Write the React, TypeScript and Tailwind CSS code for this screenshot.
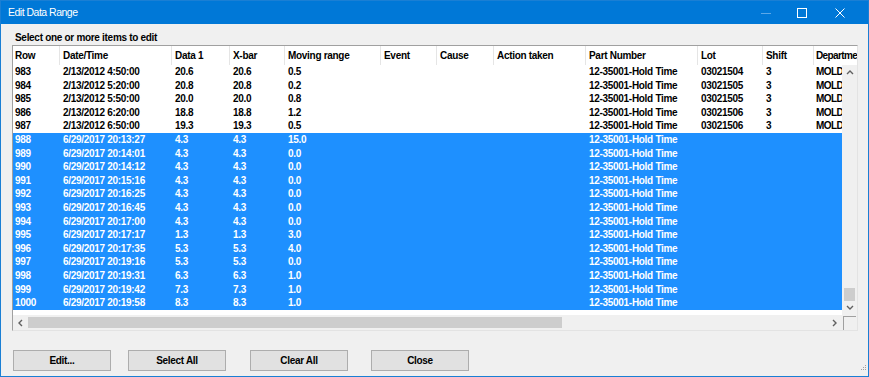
import React from 'react';

type Row = {
  row: string;
  date: string;
  d1: string;
  xbar: string;
  mr: string;
  lot?: string;
  shift?: string;
  dept?: string;
  selected?: boolean;
};

const columns = [
  { label: 'Row', w: 'w-[46px] pl-[2px]' },
  { label: 'Date/Time', w: 'w-[112px] pl-[3px]' },
  { label: 'Data 1', w: 'w-[58px] pl-[3px]' },
  { label: 'X-bar', w: 'w-[55px] pl-[3px]' },
  { label: 'Moving range', w: 'w-[96px] pl-[3px]' },
  { label: 'Event', w: 'w-[56px] pl-[3px]' },
  { label: 'Cause', w: 'w-[57px] pl-[3px]' },
  { label: 'Action taken', w: 'w-[92px] pl-[3px]' },
  { label: 'Part Number', w: 'w-[112px] pl-[3px]' },
  { label: 'Lot', w: 'w-[65px] pl-[3px]' },
  { label: 'Shift', w: 'w-[51px] pl-[3px]' },
  { label: 'Department', w: 'w-[80px] pl-[2px] tracking-[-0.6px]' },
];

const old: Row[] = [
  { row: '983', date: '2/13/2012 4:50:00', d1: '20.6', xbar: '20.6', mr: '0.5', lot: '03021504', shift: '3', dept: 'MOLD' },
  { row: '984', date: '2/13/2012 5:20:00', d1: '20.8', xbar: '20.8', mr: '0.2', lot: '03021505', shift: '3', dept: 'MOLD' },
  { row: '985', date: '2/13/2012 5:50:00', d1: '20.0', xbar: '20.0', mr: '0.8', lot: '03021505', shift: '3', dept: 'MOLD' },
  { row: '986', date: '2/13/2012 6:20:00', d1: '18.8', xbar: '18.8', mr: '1.2', lot: '03021506', shift: '3', dept: 'MOLD' },
  { row: '987', date: '2/13/2012 6:50:00', d1: '19.3', xbar: '19.3', mr: '0.5', lot: '03021506', shift: '3', dept: 'MOLD' },
];

const recent: [string, string, string, string][] = [
  ['988', '20:13:27', '4.3', '15.0'],
  ['989', '20:14:01', '4.3', '0.0'],
  ['990', '20:14:12', '4.3', '0.0'],
  ['991', '20:15:16', '4.3', '0.0'],
  ['992', '20:16:25', '4.3', '0.0'],
  ['993', '20:16:45', '4.3', '0.0'],
  ['994', '20:17:00', '4.3', '0.0'],
  ['995', '20:17:17', '1.3', '3.0'],
  ['996', '20:17:35', '5.3', '4.0'],
  ['997', '20:19:16', '5.3', '0.0'],
  ['998', '20:19:31', '6.3', '1.0'],
  ['999', '20:19:42', '7.3', '1.0'],
  ['1000', '20:19:58', '8.3', '1.0'],
];

const rows: Row[] = [
  ...old,
  ...recent.map(([row, t, v, mr]) => ({
    row,
    date: '6/29/2017 ' + t,
    d1: v,
    xbar: v,
    mr,
    selected: true,
  })),
];

function Chevron({ dir }: { dir: 'up' | 'down' | 'left' | 'right' }) {
  const d = {
    up: 'M1 5 L4 2 L7 5',
    down: 'M1 2 L4 5 L7 2',
    left: 'M5 1 L2 4 L5 7',
    right: 'M2 1 L5 4 L2 7',
  }[dir];
  return (
    <svg width="8" height="8" viewBox="0 0 8 8">
      <path d={d} fill="none" stroke="#606060" strokeWidth="1.4" />
    </svg>
  );
}

function Button({ label, className }: { label: string; className?: string }) {
  return (
    <div
      className={
        'w-[98px] h-[21px] flex items-center justify-center bg-[#e1e1e1] border border-[#adadad] text-black ' +
        (className ?? '')
      }
    >
      {label}
    </div>
  );
}

export default function App() {
  return (
    <div className="w-[869px] h-[377px] border border-[#1a7fd4] bg-[#f0f0f0] flex flex-col font-['Liberation_Sans',Arial,sans-serif] text-[10px] font-bold tracking-[-0.3px] overflow-hidden">
      {/* title bar */}
      <div className="h-[23px] shrink-0 bg-[#0078d7] flex items-center text-white">
        <span className="ml-[7px] font-normal text-[10.5px] tracking-[-0.5px]">Edit Data Range</span>
        <div className="ml-auto flex items-center">
          <div className="w-[36px] flex justify-center">
            <svg width="10" height="10" viewBox="0 0 10 10">
              <path d="M0 5.5 H10" stroke="#5ca8e8" strokeWidth="1" />
            </svg>
          </div>
          <div className="w-[36px] flex justify-center">
            <svg width="10" height="10" viewBox="0 0 10 10">
              <rect x="0.5" y="0.5" width="9" height="9" fill="none" stroke="#ffffff" strokeWidth="1" />
            </svg>
          </div>
          <div className="w-[40px] flex justify-center mr-[8px]">
            <svg width="10" height="10" viewBox="0 0 10 10">
              <path d="M0.5 0.5 L9.5 9.5 M9.5 0.5 L0.5 9.5" stroke="#ffffff" strokeWidth="1" />
            </svg>
          </div>
        </div>
      </div>

      {/* label */}
      <div className="ml-[14px] mt-[8px] h-[12px] leading-[12px] text-black">Select one or more items to edit</div>

      {/* list view */}
      <div className="ml-[11px] mt-[1px] w-[846px] h-[286px] border border-t-[#a0a0a0] border-l-[#a0a0a0] border-r-[#e3e3e3] border-b-[#e3e3e3] bg-white flex flex-col text-black">
        <div className="h-[19px] shrink-0 flex items-center overflow-hidden bg-white">
          {columns.map((c, i) => (
            <div
              key={c.label}
              className={
                c.w +
                ' shrink-0 h-full flex items-center whitespace-nowrap overflow-hidden ' +
                (i > 0 ? 'border-l border-[#e5e5e5]' : '')
              }
            >
              {c.label}
            </div>
          ))}
        </div>
        <div className="h-[250px] shrink-0 flex">
          <div className="w-[829px] overflow-hidden bg-white">
            {rows.map((r) => {
              const cells = [
                r.row,
                r.date,
                r.d1,
                r.xbar,
                r.mr,
                '',
                '',
                '',
                '12-35001-Hold Time',
                r.lot ?? '',
                r.shift ?? '',
                r.dept ?? '',
              ];
              return (
                <div
                  key={r.row}
                  className={
                    'h-[13.6px] leading-[13.6px] flex whitespace-nowrap ' +
                    (r.selected ? 'bg-[#1e90ff] text-white' : 'text-black')
                  }
                >
                  {cells.map((v, i) => (
                    <div
                      key={i}
                      className={
                        columns[i].w + ' shrink-0 ' + (i > 0 ? 'border-l border-transparent ' : '') + (i < 11 ? 'overflow-hidden' : '')
                      }
                    >
                      {v}
                    </div>
                  ))}
                </div>
              );
            })}
          </div>
          {/* vertical scrollbar */}
          <div className="w-[15px] flex flex-col bg-[#f0f0f0]">
            <div className="h-[16px] flex items-center justify-center">
              <Chevron dir="up" />
            </div>
            <div className="flex-1 flex flex-col justify-end items-center">
              <div className="w-[11px] h-[13px] bg-[#cdcdcd]" />
            </div>
            <div className="h-[14px] flex items-center justify-center">
              <Chevron dir="down" />
            </div>
          </div>
        </div>
        {/* horizontal scrollbar */}
        <div className="h-[15px] shrink-0 flex">
          <div className="w-[829px] flex items-center bg-[#f0f0f0]">
            <div className="w-[15px] flex justify-center">
              <Chevron dir="left" />
            </div>
            <div className="w-[534px] h-[11px] bg-[#cdcdcd]" />
            <div className="ml-auto w-[15px] flex justify-center">
              <Chevron dir="right" />
            </div>
          </div>
          <div className="w-[15px] flex items-start justify-center bg-[#f0f0f0]">
            <div className="w-[13px] h-[14px] mt-[1px] border-l border-t border-[#a0a0a0] bg-[#f0f0f0]" />
          </div>
        </div>
      </div>

      {/* buttons */}
      <div className="ml-[12px] mt-[18px] flex items-center">
        <Button label="Edit..." />
        <Button label="Select All" className="ml-[17px]" />
        <Button label="Clear All" className="ml-[24px]" />
        <Button label="Close" className="ml-[23px]" />
        <div className="ml-auto mr-[1px] self-end mt-[16px]">
          <svg width="6" height="6" viewBox="0 0 6 6">
            <rect x="4" y="0" width="1" height="1" fill="#a0a0a0" />
            <rect x="2" y="2" width="1" height="1" fill="#a0a0a0" />
            <rect x="4" y="2" width="1" height="1" fill="#a0a0a0" />
            <rect x="0" y="4" width="1" height="1" fill="#a0a0a0" />
            <rect x="2" y="4" width="1" height="1" fill="#a0a0a0" />
            <rect x="4" y="4" width="1" height="1" fill="#a0a0a0" />
          </svg>
        </div>
      </div>
    </div>
  );
}
